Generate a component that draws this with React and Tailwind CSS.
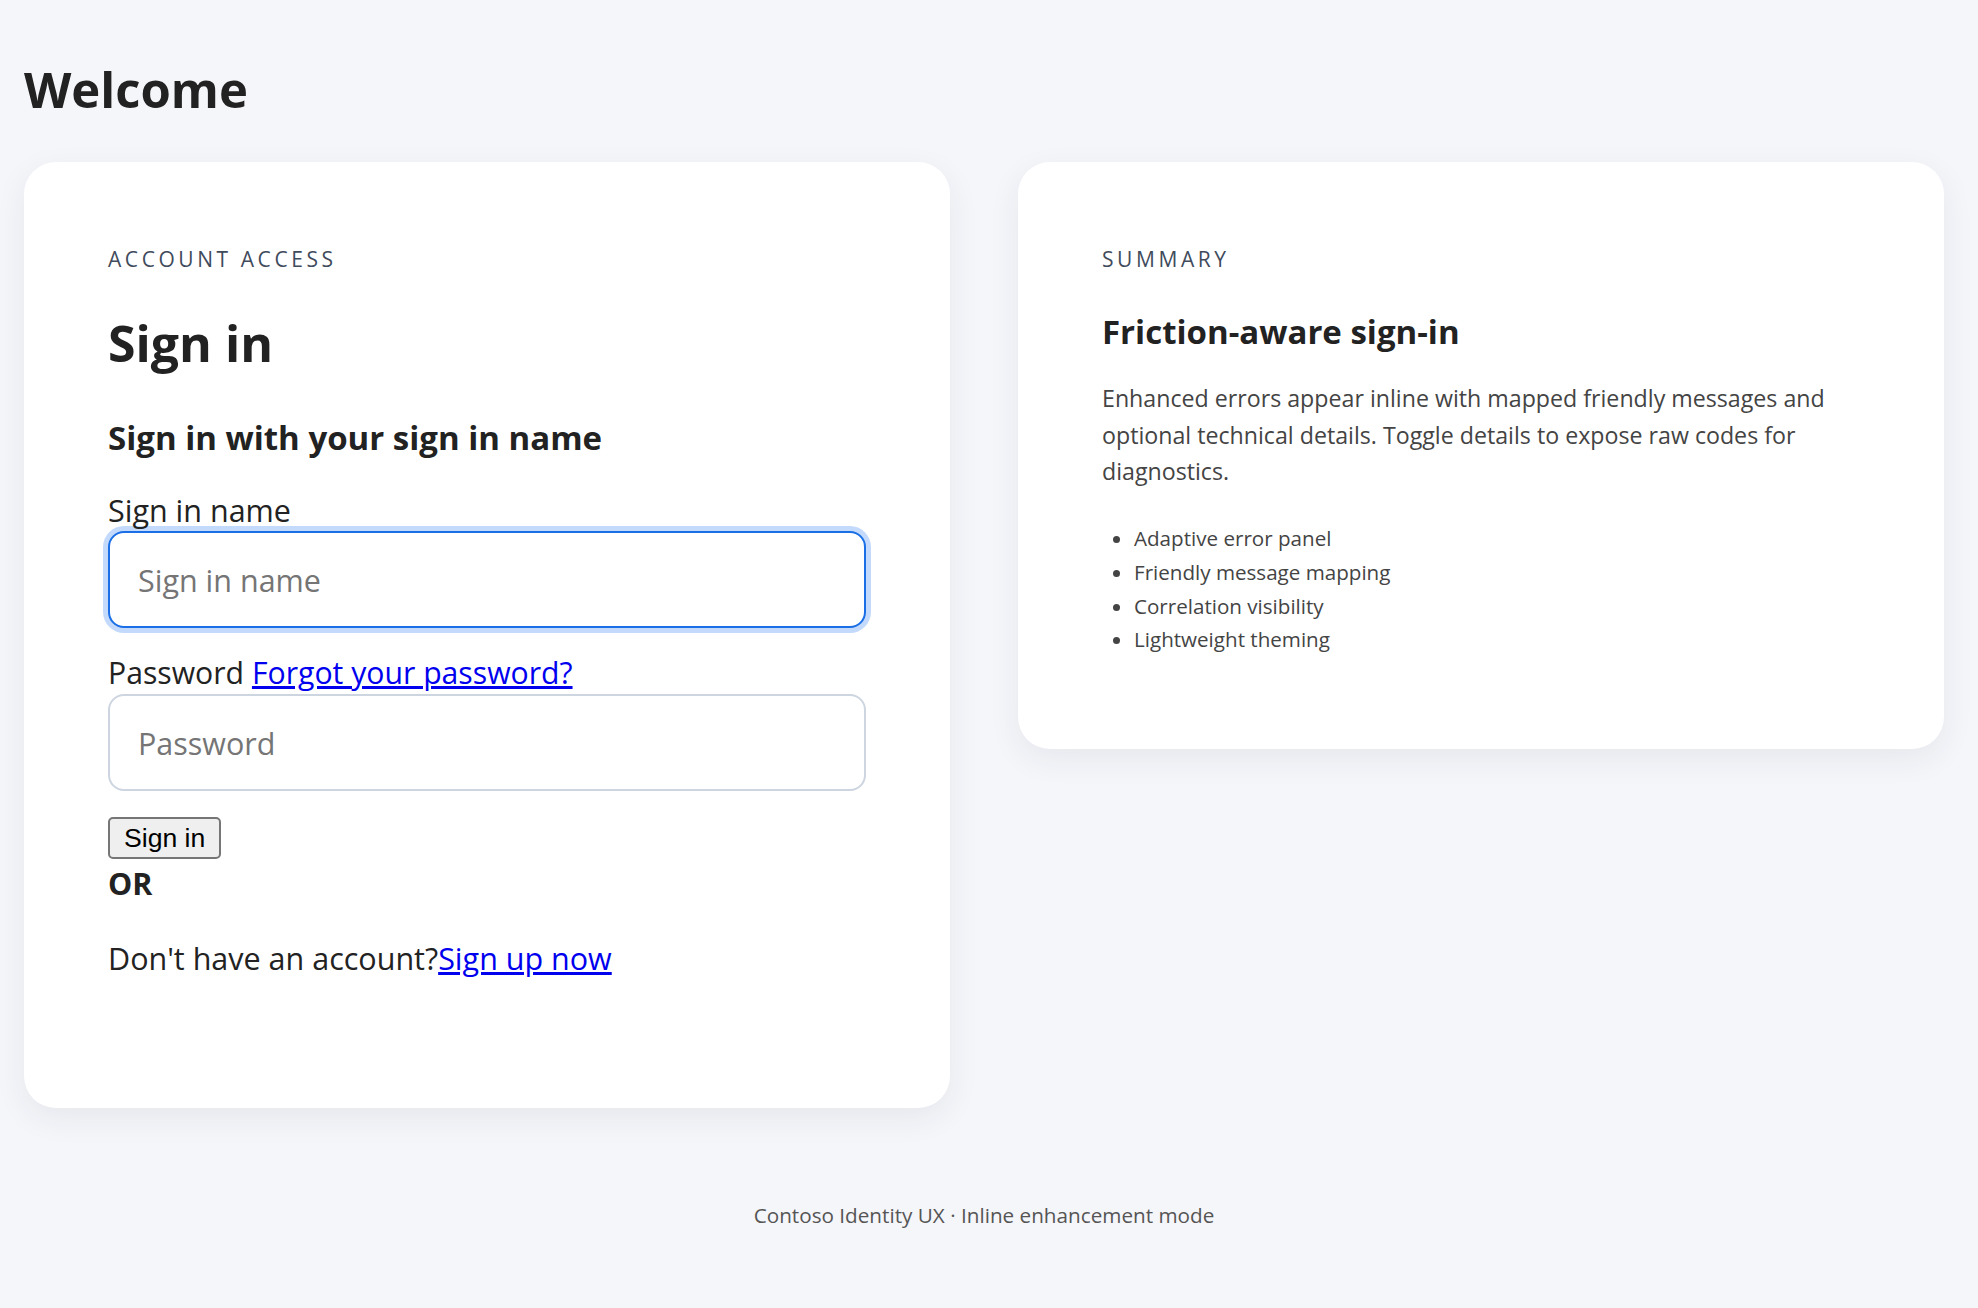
const font = { fontFamily: '"Open Sans", "Noto Sans", sans-serif' };

const features = [
  'Adaptive error panel',
  'Friendly message mapping',
  'Correlation visibility',
  'Lightweight theming',
];

const SignInCard = () => (
  <div className="bg-white rounded-[32px] shadow-[0_10px_32px_rgba(30,41,59,0.07)] px-[84px] pt-[83px] pb-[130px]">
    <p className="text-[21px] leading-[28px] uppercase tracking-[0.17em] font-medium text-[#3f4b5c]">Account access</p>
    <h1 className="mt-[40px] text-[50px] leading-[60px] font-bold text-[#222]">Sign in</h1>
    <h2 className="mt-[43px] text-[33px] leading-[44px] font-bold text-[#222]">Sign in with your sign in name</h2>

    <label className="block mt-[30px] text-[30.5px] leading-[40px] text-[#222]">Sign in name</label>
    <input
      type="text"
      placeholder="Sign in name"
      className="block mt-[1px] w-full h-[97px] rounded-[16px] border-2 border-[#1a6fe6] bg-white pl-[28px] text-[30.5px] placeholder-[#757575] outline-none shadow-[0_0_0_5px_#c3dafc]"
      style={font}
    />

    <div className="mt-[25px] text-[30.2px] leading-[40px] text-[#222]">
      Password <a href="#" className="text-[#0000ee] underline">Forgot your password?</a>
    </div>
    <input
      type="password"
      placeholder="Password"
      className="block mt-[1px] w-full h-[97px] rounded-[16px] border-2 border-[#cdd5e0] bg-white pl-[28px] text-[30.5px] placeholder-[#757575] outline-none"
      style={font}
    />

    <button
      className="block mt-[26px] h-[42px] px-[14px] rounded-[5px] border-2 border-[#767676] bg-[#efefef] text-[26.6px] leading-none text-black"
      style={{ fontFamily: '"Liberation Sans", Arial, sans-serif' }}
    >
      Sign in
    </button>
    <div className="mt-[4px] text-[30.5px] leading-[40px] font-bold text-[#222]">OR</div>
    <p className="mt-[35px] text-[30.5px] leading-[40px] text-[#222]">
      Don't have an account?<a href="#" className="text-[#0000ee] underline">Sign up now</a>
    </p>
  </div>
);

const SummaryCard = () => (
  <div className="bg-white rounded-[32px] shadow-[0_10px_32px_rgba(30,41,59,0.07)] px-[84px] pt-[83px] pb-[92px]">
    <p className="text-[21px] leading-[28px] uppercase tracking-[0.17em] font-medium text-[#3f4b5c]">Summary</p>
    <h2 className="mt-[37px] text-[33px] leading-[44px] font-bold text-[#222]">Friction-aware sign-in</h2>
    <p className="mt-[26px] text-[23.2px] leading-[36.7px] text-[#444]">
      Enhanced errors appear inline with mapped friendly messages and optional technical details. Toggle details to expose raw codes for diagnostics.
    </p>
    <ul className="mt-[32px] list-disc pl-[32px] text-[20.6px] leading-[33.7px] text-[#444]">
      {features.map((f) => (
        <li key={f}>{f}</li>
      ))}
    </ul>
  </div>
);

export default function App() {
  return (
    <div className="min-h-screen bg-[#f5f6fa] pt-[59px] pb-[60px]" style={font}>
      <div className="w-[1920px] ml-[24px]">
        <h1 className="text-[49px] leading-[60px] font-bold text-[#222]">Welcome</h1>
        <div className="mt-[43px] grid grid-cols-[926px_926px] gap-[68px] items-start">
          <SignInCard />
          <SummaryCard />
        </div>
        <footer className="mt-[92px] text-center text-[20.7px] leading-[30px] text-[#555]">
          Contoso Identity UX · Inline enhancement mode
        </footer>
      </div>
    </div>
  );
}
